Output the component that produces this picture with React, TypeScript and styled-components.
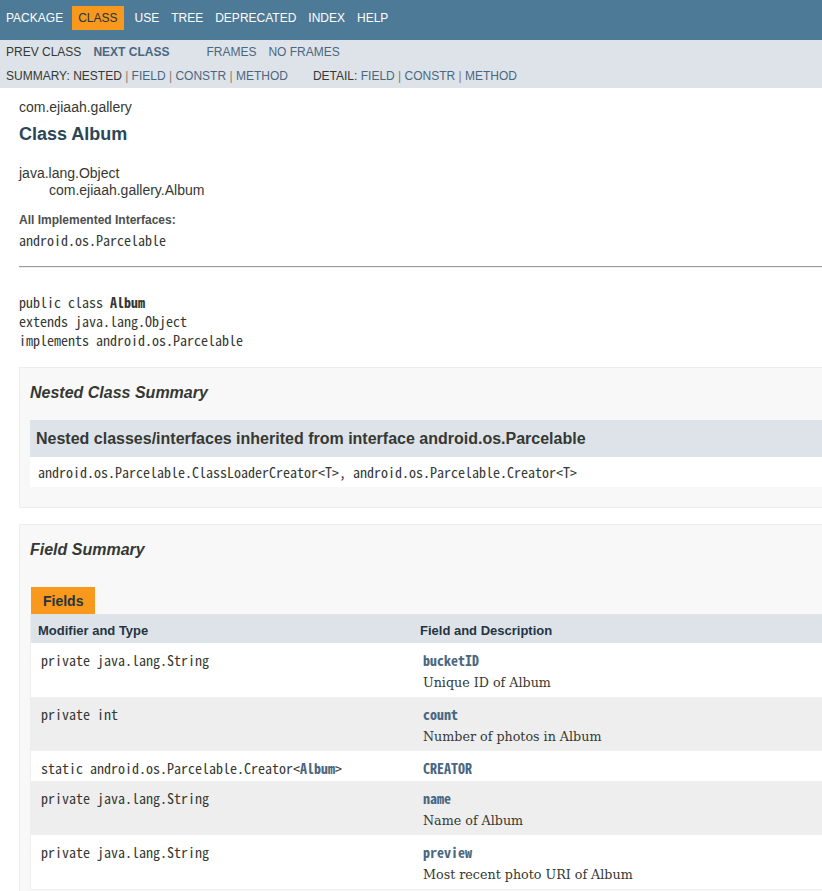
import React from "react";
import styled, { createGlobalStyle } from "styled-components";

const MONO = `"Noto Sans Mono CJK KR", "DejaVu Sans Mono", monospace`;
const SERIF = `"DejaVu Serif", Georgia, serif`;

const GlobalStyle = createGlobalStyle`
  html, body { margin: 0; padding: 0; overflow: hidden; background: #ffffff; }
  body {
    color: #353833;
    font-family: "Liberation Sans", Arial, Helvetica, sans-serif;
    font-size: 14px;
  }
  * { box-sizing: border-box; }
`;

const Page = styled.div`
  width: 1040px;
`;

const TopNav = styled.ul`
  display: flex;
  margin: 0;
  padding: 6px 0 0 0;
  height: 40px;
  list-style: none;
  background: #4d7a97;
  font-size: 12px;
`;

const TopNavItem = styled.li<{ $active?: boolean }>`
  padding: 5px 6px;
  height: 24px;
  line-height: 14px;
  text-transform: uppercase;
  color: ${(p) => (p.$active ? "#253441" : "#ffffff")};
  background: ${(p) => (p.$active ? "#f8981d" : "transparent")};
  margin: ${(p) => (p.$active ? "0 5px 0 3px" : "0")};
`;

const SubNav = styled.div`
  background: #dee3e9;
  height: 48px;
  font-size: 12px;
  text-transform: uppercase;
`;

const SubNavRow = styled.div<{ $top: number; $h: number }>`
  display: flex;
  height: ${(p) => p.$h}px;
  padding-top: ${(p) => p.$top}px;
  line-height: 14px;
`;

const SubNavGroup = styled.div<{ $gap: number }>`
  display: flex;
  margin-right: ${(p) => p.$gap}px;
`;

const SubNavItem = styled.span<{ $link?: boolean; $bold?: boolean; $pad?: number }>`
  padding: 0 ${(p) => p.$pad ?? 6}px;
  color: ${(p) => (p.$link ? "#4a6782" : "#353833")};
  font-weight: ${(p) => (p.$bold ? "bold" : "normal")};
  white-space: pre;
`;

const Sep = styled.span`
  color: #8a7c70;
`;

const Header = styled.div`
  padding: 11px 20px 0 19px;
`;

const SubTitle = styled.div`
  font-size: 14px;
  line-height: 16px;
`;

const Title = styled.h2`
  margin: 9px 0 0;
  font-size: 18px;
  line-height: 21px;
  color: #2c4557;
`;

const Content = styled.div`
  padding: 0 0 0 19px;
`;

const Inheritance = styled.div`
  margin-top: 20px;
  line-height: 17px;
  font-size: 14px;
`;

const InheritChild = styled.div`
  padding-left: 30px;
`;

const DefTerm = styled.div`
  margin-top: 14px;
  font-size: 12px;
  line-height: 14px;
  font-weight: bold;
  color: #4e4e4e;
`;

const DefValue = styled.div`
  margin-top: 4px;
  font-family: ${MONO};
  font-size: 14px;
  line-height: 19.6px;
`;

const Rule = styled.hr`
  margin: 15px 0 0;
  height: 0;
  border: 0;
  border-top: 1px solid #9a9a9a;
  border-bottom: 1px solid #eeeeee;
`;

const Signature = styled.pre`
  margin: 25px 0 0;
  font-family: ${MONO};
  font-size: 14px;
  line-height: 19px;
  color: #353833;
`;

const Strong = styled.b<{ $link?: boolean }>`
  font-weight: bold;
  color: ${(p) => (p.$link ? "#4a6782" : "#353833")};
`;

const SummaryBox = styled.section<{ $top: number }>`
  margin-top: ${(p) => p.$top}px;
  padding: 0 20px 20px 10px;
  border: 1px solid #ededed;
  background: #f8f8f8;
`;

const BoxTitle = styled.h3`
  margin: 14px 0 0;
  font-size: 16px;
  line-height: 22px;
  font-style: italic;
  font-weight: bold;
  color: #353833;
`;

const InheritedHeader = styled.h3`
  margin: 16px 0 0;
  padding: 7px 6px;
  font-size: 16px;
  line-height: 23px;
  font-weight: bold;
  background: #dee3e9;
  color: #353833;
`;

const InheritedList = styled.div`
  background: #ffffff;
  padding: 5px 0 5px 8px;
  font-family: ${MONO};
  font-size: 14px;
  line-height: 20px;
`;

const TabBar = styled.div`
  margin-top: 26px;
  padding-left: 1px;
  display: flex;
`;

const Tab = styled.span`
  background: #f8981d;
  color: #253441;
  font-weight: bold;
  font-size: 14px;
  line-height: 16px;
  height: 27px;
  padding: 6px 12px 0;
`;

const MemberTable = styled.div`
  display: grid;
  grid-template-columns: 382px 1fr;
  border-left: 1px solid #eeeeee;
  border-right: 1px solid #eeeeee;
  border-bottom: 1px solid #eeeeee;
`;

const HeadCell = styled.div`
  background: #dee3e9;
  color: #253441;
  font-size: 13px;
  font-weight: bold;
  line-height: 18px;
  padding: 8px 3px 3px 7px;
`;

const Cell = styled.div<{ $alt: boolean }>`
  background: ${(p) => (p.$alt ? "#eeeeef" : "#ffffff")};
  padding: 8px 3px 3px 10px;
`;

const Code = styled.code`
  display: block;
  font-family: ${MONO};
  font-size: 14px;
  line-height: 19px;
  color: #353833;
`;

const MemberName = styled.code`
  display: block;
  font-family: ${MONO};
  font-size: 14px;
  line-height: 19px;
  font-weight: bold;
  color: #4a6782;
`;

const Block = styled.div`
  margin: 3px 10px 2px 0;
  font-family: ${SERIF};
  font-size: 12.7px;
  line-height: 19px;
  color: #353833;
`;

type Field = { type: React.ReactNode; name: string; desc?: string };

const fields: Field[] = [
  { type: "private java.lang.String", name: "bucketID", desc: "Unique ID of Album" },
  { type: "private int", name: "count", desc: "Number of photos in Album" },
  {
    type: (
      <>
        static android.os.Parcelable.Creator&lt;<Strong $link>Album</Strong>&gt;
      </>
    ),
    name: "CREATOR",
  },
  { type: "private java.lang.String", name: "name", desc: "Name of Album" },
  { type: "private java.lang.String", name: "preview", desc: "Most recent photo URI of Album" },
];

const navItems = ["Package", "Class", "Use", "Tree", "Deprecated", "Index", "Help"];

export default function App() {
  return (
    <Page>
      <GlobalStyle />
      <TopNav>
        {navItems.map((n) => (
          <TopNavItem key={n} $active={n === "Class"}>
            {n}
          </TopNavItem>
        ))}
      </TopNav>
      <SubNav>
        <SubNavRow $top={5} $h={23}>
          <SubNavGroup $gap={25}>
            <SubNavItem>Prev Class</SubNavItem>
            <SubNavItem $link $bold>
              Next Class
            </SubNavItem>
          </SubNavGroup>
          <SubNavGroup $gap={25}>
            <SubNavItem $link>Frames</SubNavItem>
            <SubNavItem $link>No Frames</SubNavItem>
          </SubNavGroup>
        </SubNavRow>
        <SubNavRow $top={6} $h={25}>
          <SubNavGroup $gap={25}>
            <SubNavItem $pad={0} style={{ paddingLeft: 6 }}>
              {"Summary:\u00a0Nested\u00a0"}
              <Sep>|</Sep>
              {"\u00a0"}
              <SubNavItem $link $pad={0}>Field</SubNavItem>
              {"\u00a0"}
              <Sep>|</Sep>
              {"\u00a0"}
              <SubNavItem $link $pad={0}>Constr</SubNavItem>
              {"\u00a0"}
              <Sep>|</Sep>
              {"\u00a0"}
              <SubNavItem $link $pad={0}>Method</SubNavItem>
            </SubNavItem>
          </SubNavGroup>
          <SubNavGroup $gap={25}>
            <SubNavItem $pad={0}>
              {"Detail:\u00a0"}
              <SubNavItem $link $pad={0}>Field</SubNavItem>
              {"\u00a0"}
              <Sep>|</Sep>
              {"\u00a0"}
              <SubNavItem $link $pad={0}>Constr</SubNavItem>
              {"\u00a0"}
              <Sep>|</Sep>
              {"\u00a0"}
              <SubNavItem $link $pad={0}>Method</SubNavItem>
            </SubNavItem>
          </SubNavGroup>
        </SubNavRow>
      </SubNav>

      <Header>
        <SubTitle>com.ejiaah.gallery</SubTitle>
        <Title>Class Album</Title>
      </Header>

      <Content>
        <Inheritance>
          <div>java.lang.Object</div>
          <InheritChild>com.ejiaah.gallery.Album</InheritChild>
        </Inheritance>
        <DefTerm>All Implemented Interfaces:</DefTerm>
        <DefValue>android.os.Parcelable</DefValue>
        <Rule />
        <Signature>
          public class <Strong>Album</Strong>
          {"\n"}extends java.lang.Object
          {"\n"}implements android.os.Parcelable
        </Signature>

        <SummaryBox $top={17}>
          <BoxTitle>Nested Class Summary</BoxTitle>
          <InheritedHeader>Nested classes/interfaces inherited from interface android.os.Parcelable</InheritedHeader>
          <InheritedList>
            android.os.Parcelable.ClassLoaderCreator&lt;T&gt;, android.os.Parcelable.Creator&lt;T&gt;
          </InheritedList>
        </SummaryBox>

        <SummaryBox $top={16}>
          <BoxTitle>Field Summary</BoxTitle>
          <TabBar>
            <Tab>Fields</Tab>
          </TabBar>
          <MemberTable>
            <HeadCell>Modifier and Type</HeadCell>
            <HeadCell>Field and Description</HeadCell>
            {fields.map((f, i) => (
              <React.Fragment key={f.name}>
                <Cell $alt={i % 2 === 1}>
                  <Code>{f.type}</Code>
                </Cell>
                <Cell $alt={i % 2 === 1}>
                  <MemberName>{f.name}</MemberName>
                  {f.desc && <Block>{f.desc}</Block>}
                </Cell>
              </React.Fragment>
            ))}
          </MemberTable>
        </SummaryBox>
      </Content>
    </Page>
  );
}
